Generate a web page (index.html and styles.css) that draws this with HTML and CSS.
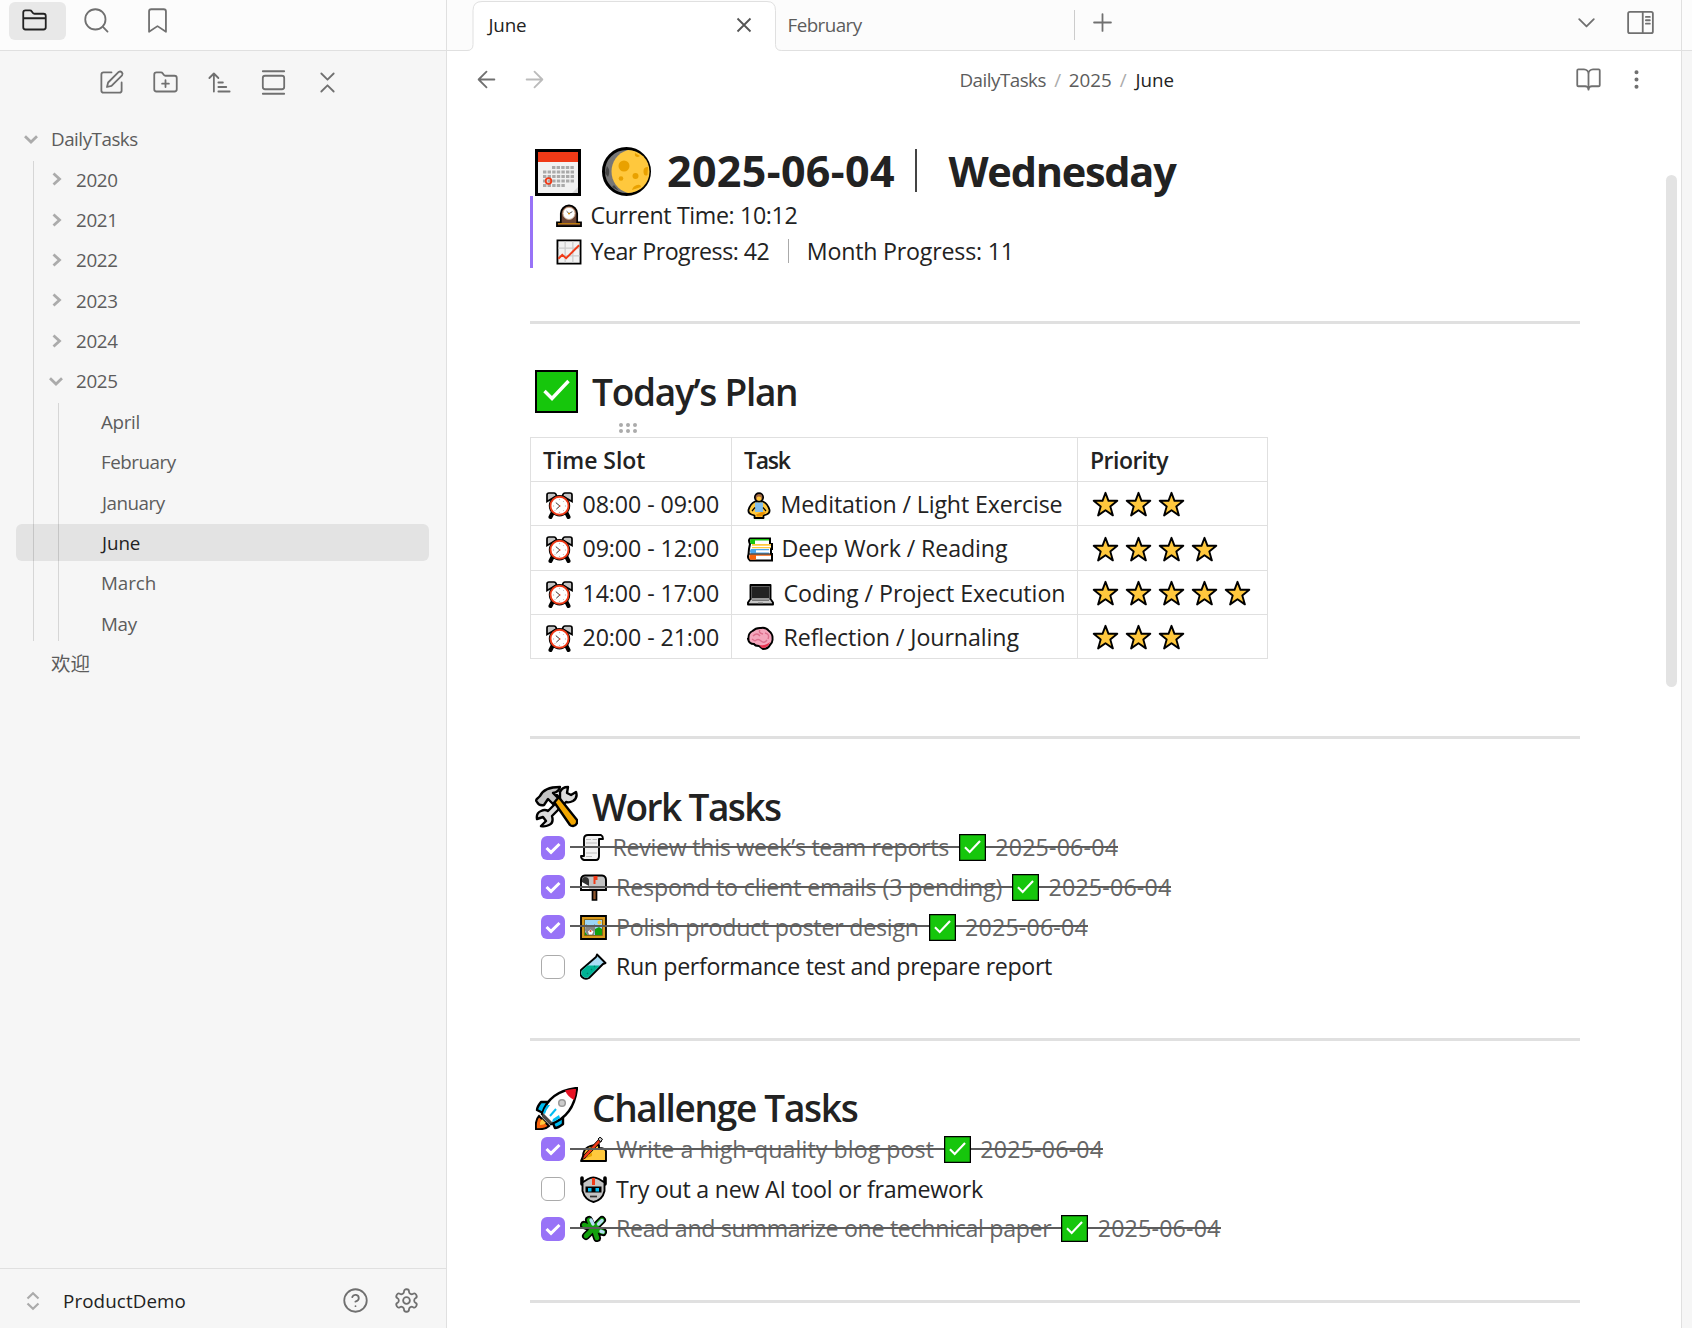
FILE: index.html
```html
<!DOCTYPE html>
<html lang="en">
<head>
<meta charset="utf-8">
<title>June - ProductDemo</title>
<link rel="stylesheet" href="styles.css">
</head>
<body>
<svg class="defs" aria-hidden="true">
  <symbol id="check" viewBox="0 0 43 43"><path fill="#000" d="M0 0h43v43H0z"/><path fill="#16c60c" d="M2 2h39v39H2z"/><path d="M9.500 21l7.500 7.500L33.500 11" fill="none" stroke="#fff" stroke-width="3.400"/></symbol>
  <symbol id="alarm" viewBox="0 0 27 27"><path d="M6.500 21l-2 4M20.500 21l2 4" stroke="#000" stroke-width="4" stroke-linecap="round"/><path d="M1 9.500V3Q1 1 3 1h5q2 0 2.500 3zM26 9.500V3Q26 1 24 1h-5q-2 0-2.500 3z" fill="#c4c4c4" stroke="#000" stroke-width="1.700"/><circle cx="13.500" cy="13.800" r="10.700" fill="#000"/><circle cx="13.500" cy="13.800" r="9" fill="#fff" stroke="#f03a17" stroke-width="1.900"/><g fill="#bbb"><circle cx="13.500" cy="7.500" r=".7"/><circle cx="19.500" cy="14" r=".7"/><circle cx="13.500" cy="20.500" r=".7"/><circle cx="7.500" cy="14" r=".7"/><circle cx="17.500" cy="9.500" r=".6"/><circle cx="17.500" cy="18.500" r=".6"/><circle cx="9" cy="18.500" r=".6"/></g><path d="M9.800 10.600l4 3.400-3.500 3.200" fill="none" stroke="#333" stroke-width="1"/><circle cx="13.800" cy="14" r=".8" fill="#f03a17"/></symbol>
  <symbol id="star" viewBox="0 0 27 27"><path d="M13.500 1.800l3 8h8.800l-7 5.600 2.600 9-7.400-5.200-7.400 5.200 2.600-9-7-5.600h8.800z" fill="#ffc83d" stroke="#000" stroke-width="1.900" stroke-linejoin="round"/></symbol>
  <symbol id="chev-r" viewBox="0 0 14 14"><path d="M4.500 1.500L10.500 7l-6 5.500" fill="none" stroke="#ababab" stroke-width="2.800"/></symbol>
  <symbol id="chev-d" viewBox="0 0 14 14"><path d="M1 4.300l6 5.700 6-5.700" fill="none" stroke="#ababab" stroke-width="2.800"/></symbol>
</svg>

<div class="app">
  <aside class="side">
    <div class="side-tabs">
      <div class="side-tab active"><svg class="icon" viewBox="0 0 24 24"><path d="M20 20a2 2 0 0 0 2-2V8a2 2 0 0 0-2-2h-7.900a2 2 0 0 1-1.690-.9L9.600 3.900A2 2 0 0 0 7.930 3H4a2 2 0 0 0-2 2v13a2 2 0 0 0 2 2ZM2 10h20"/></svg></div>
      <div class="side-tab search"><svg class="icon" viewBox="0 0 24 24"><circle cx="11" cy="11" r="9"/><path d="m21.800 21.800-4.300-4.300"/></svg></div>
      <div class="side-tab"><svg class="icon" viewBox="0 0 24 24"><path d="m19.500 22-7.500-5-7.500 5V4a2 2 0 0 1 2-2h11a2 2 0 0 1 2 2z"/></svg></div>
    </div>
    <div class="side-actions">
      <svg class="icon" viewBox="0 0 24 24"><path d="M12 3H5a2 2 0 0 0-2 2v14a2 2 0 0 0 2 2h14a2 2 0 0 0 2-2v-7M18.400 2.600a2.170 2.170 0 0 1 3 3L12 15l-4 1 1-4Z"/></svg>
      <svg class="icon" viewBox="0 0 24 24"><path d="M12 10v6M9 13h6M20 20a2 2 0 0 0 2-2V8a2 2 0 0 0-2-2h-7.900a2 2 0 0 1-1.690-.9L9.600 3.900A2 2 0 0 0 7.930 3H4a2 2 0 0 0-2 2v13a2 2 0 0 0 2 2Z"/></svg>
      <svg class="icon" viewBox="0 0 24 24"><path d="m3 8 4-4 4 4M7 4v16M11 12h4M11 16h7M11 20h10"/></svg>
      <svg class="icon" viewBox="0 0 24 24"><path d="M2.500 2h19M2.500 22h19"/><rect x="2.500" y="6" width="19" height="12" rx="2"/></svg>
      <svg class="icon" viewBox="0 0 24 24"><path d="m6.500 20 5.500-5.500 5.500 5.500M6.500 4l5.500 5.500L17.500 4"/></svg>
    </div>
    <nav class="tree">
      <div class="row"><svg class="chev"><use href="#chev-d"/></svg><span class="tr-53">DailyTasks</span></div>
      <div class="branch">
        <div class="row"><svg class="chev"><use href="#chev-r"/></svg><span>2020</span></div>
        <div class="row"><svg class="chev"><use href="#chev-r"/></svg><span>2021</span></div>
        <div class="row"><svg class="chev"><use href="#chev-r"/></svg><span>2022</span></div>
        <div class="row"><svg class="chev"><use href="#chev-r"/></svg><span>2023</span></div>
        <div class="row"><svg class="chev"><use href="#chev-r"/></svg><span>2024</span></div>
        <div class="row"><svg class="chev"><use href="#chev-d"/></svg><span>2025</span></div>
        <div class="branch">
          <div class="row"><i class="chev"></i><span>April</span></div>
          <div class="row"><i class="chev"></i><span class="tr-53">February</span></div>
          <div class="row j"><i class="chev"></i><span class="tr-53">January</span></div>
          <div class="row selected j"><i class="chev"></i><span class="tr-10">June</span></div>
          <div class="row"><i class="chev"></i><span class="tr-10">March</span></div>
          <div class="row"><i class="chev"></i><span>May</span></div>
        </div>
      </div>
      <div class="row"><i class="chev"></i><span class="cjk">欢迎</span></div>
    </nav>
    <footer class="vault">
      <svg class="updown" viewBox="0 0 14 20"><path d="M1.500 7.500L7 2.200l5.500 5.300M1.500 12.500L7 17.800l5.500-5.300" fill="none" stroke="#ababab" stroke-width="2.200"/></svg>
      <span class="vault-name">ProductDemo</span>
      <svg class="icon" viewBox="0 0 24 24"><circle cx="12" cy="12" r="10"/><path d="M9.090 9a3 3 0 0 1 5.830 1c0 2-3 3-3 3M12 17h.01"/></svg>
      <svg class="icon" viewBox="0 0 24 24"><path d="M12.220 2h-.44a2 2 0 0 0-2 2v.18a2 2 0 0 1-1 1.730l-.43.25a2 2 0 0 1-2 0l-.15-.08a2 2 0 0 0-2.730.73l-.22.38a2 2 0 0 0 .73 2.730l.15.1a2 2 0 0 1 1 1.720v.51a2 2 0 0 1-1 1.740l-.15.09a2 2 0 0 0-.73 2.730l.22.38a2 2 0 0 0 2.730.73l.15-.08a2 2 0 0 1 2 0l.43.25a2 2 0 0 1 1 1.730V20a2 2 0 0 0 2 2h.44a2 2 0 0 0 2-2v-.18a2 2 0 0 1 1-1.730l.43-.25a2 2 0 0 1 2 0l.15.08a2 2 0 0 0 2.730-.73l.22-.39a2 2 0 0 0-.73-2.730l-.15-.08a2 2 0 0 1-1-1.740v-.5a2 2 0 0 1 1-1.740l.15-.09a2 2 0 0 0 .73-2.730l-.22-.38a2 2 0 0 0-2.730-.73l-.15.08a2 2 0 0 1-2 0l-.43-.25a2 2 0 0 1-1-1.730V4a2 2 0 0 0-2-2z"/><circle cx="12" cy="12" r="3"/></svg>
    </footer>
  </aside>

  <main class="main">
    <div class="tabs">
      <div class="tab open">
        <svg class="tab-shape" viewBox="0 0 320 51"><path d="M0 50.500h2q6 0 6-6V10.500Q8 1.500 17 1.500H302q8.500 0 8.500 9v34q0 6 6 6H320V51H0z" fill="#fff"/><path d="M0 50.500h2q6 0 6-6V10.500Q8 1.500 17 1.500H302q8.500 0 8.500 9v34q0 6 6 6H320" fill="none" stroke="#e0e0e0"/></svg>
        <span class="tab-title">June</span>
        <svg class="close" viewBox="0 0 16 16"><path d="M1.500 1.500l13 13M14.500 1.500l-13 13" stroke="#555" stroke-width="1.800"/></svg>
      </div>
      <div class="tab other"><span>February</span></div>
      <svg class="icon plus" viewBox="0 0 24 24"><path d="M4.500 12h15M12 4.500v15"/></svg>
      <svg class="icon tab-list" viewBox="0 0 24 24"><path d="m5.500 9 6.500 6.500L18.500 9"/></svg>
      <svg class="icon" viewBox="0 0 24 24"><rect x="1" y="2.500" width="22" height="19" rx="1.500"/><path d="M14 2.500v19M16.800 7h3.500M16.800 10h3.500M16.800 13h3.500"/></svg>
    </div>
    <div class="view-head">
      <svg class="icon" viewBox="0 0 24 24"><path d="m12 19-7-7 7-7M19 12H5"/></svg>
      <svg class="icon dim" viewBox="0 0 24 24"><path d="M5 12h14M12 5l7 7-7 7"/></svg>
      <div class="crumbs"><span>DailyTasks</span><i>/</i><span class="year">2025</span><i>/</i><b>June</b></div>
      <svg class="icon book" viewBox="0 0 24 24"><path d="M12 7v14M3 18a1 1 0 0 1-1-1V4a1 1 0 0 1 1-1h5a4 4 0 0 1 4 4 4 4 0 0 1 4-4h5a1 1 0 0 1 1 1v13a1 1 0 0 1-1 1h-6a3 3 0 0 0-3 3 3 3 0 0 0-3-3z"/></svg>
      <svg class="icon dots" viewBox="0 0 24 24"><circle cx="12" cy="12" r="1"/><circle cx="12" cy="5.500" r="1"/><circle cx="12" cy="18.500" r="1"/></svg>
    </div>

    <div class="scroll"></div>
    <article class="note">
      <h1>
        <svg class="cal" viewBox="0 0 46 47"><path fill="#000" d="M0 0h46v47H0z"/><path fill="#f2f2f2" d="M3 3h40v41H3z"/><path fill="#f03a17" d="M3 3h40v10H3z"/><path d="M43 38v6h-6zM3 44h34l6-6v6z" fill="#d8d8d8"/><path d="M17 18.500h22M8 23h31M8 27.500h31M8 32h31M8 36.500h22" stroke="#aaa" stroke-width="3" stroke-dasharray="3.400 1.200"/><circle cx="13.500" cy="32" r="2.800" fill="none" stroke="#f03a17" stroke-width="1.800"/></svg>
        <svg class="moon" viewBox="0 0 49 49"><circle cx="24.500" cy="24.500" r="23" fill="#767676" stroke="#000" stroke-width="3"/><path d="M5 19q4 5 1 11l-3-4zM12 38l5 6-7-4z" fill="#444"/><path d="M26 3a21.500 21.500 0 0 1 0 43C4 40 4 9 26 3z" fill="#ffc83d"/><g fill="#e9a100"><circle cx="22" cy="19" r="5.500"/><circle cx="33.500" cy="29" r="3"/><circle cx="19" cy="31.500" r="2.300"/><path d="M33 6q-1 4 3 4l2-1zM46 20q-5 0-4.500 5t4 3zM30 43q1-4 5-5t4 2z"/></g></svg>
        <span class="date">2025-06-04</span><i class="bar"></i><span class="day">Wednesday</span>
      </h1>
      <blockquote>
        <p>
          <svg class="em" viewBox="0 0 27 27"><path d="M1 24v-4h4V11a8.500 8.500 0 0 1 17 0v9h4v4z" fill="#6d4534" stroke="#000" stroke-width="1.800"/><path d="M2 21.500h23" stroke="#d98e00"/><circle cx="13.500" cy="10.800" r="6.300" fill="#fff" stroke="#c9a789"/><path d="M11 8.500l2.500 2.500 3.500-2" fill="none" stroke="#555"/><circle cx="13.500" cy="11" r="1" fill="#d98e00"/></svg>
          <span class="tr-36">Current Time: 10:12</span>
        </p>
        <p>
          <svg class="em" viewBox="0 0 27 27"><path d="M1.500 1.500h24v24h-24z" fill="#f2f2f2" stroke="#000" stroke-width="1.900"/><path d="M9.500 2.500v22M17.500 2.500v22M2.500 9.500h22M2.500 17.500h22" stroke="#ccc" stroke-width="1.300"/><path d="M2.500 20.500l4-4 4 3.500L24 6.500" fill="none" stroke="#f03a17" stroke-width="2"/></svg>
          <span class="tr-52">Year Progress: 42</span><i class="bar"></i><span class="tr-20">Month Progress: 11</span>
        </p>
      </blockquote>
      <hr class="first">

      <h2><svg class="em"><use href="#check"/></svg><span class="t-plan">Today’s Plan</span></h2>
      <div class="table-wrap">
        <div class="grip"><i></i><i></i><i></i><i></i><i></i><i></i></div>
        <table>
          <tr><th><span>Time Slot</span></th><th><span class="t-task">Task</span></th><th><span class="tr-52">Priority</span></th></tr>
          <tr>
            <td><div class="cell"><svg class="em"><use href="#alarm"/></svg><span>08:00 - 09:00</span></div></td>
            <td><div class="cell"><svg class="em slim" viewBox="0 0 24 27"><path d="M8 9.500Q3 12 1.500 18q-.5 3 3 4.500l3 1v2.500h9v-2.500l3-1q3.500-1.500 3-4.500-1.500-6-6.500-8.500z" fill="#ffc83d" stroke="#000" stroke-width="1.800" stroke-linejoin="round"/><path d="M8 10.500h8V20H8z" fill="#83beec"/><path d="M5 19l3-3.500M19 19l-3-3.500" stroke="#000" stroke-width="1.200"/><path d="M9 22.500l6-2.500 4 .5-5 4h-4z" fill="#e98f00"/><circle cx="12" cy="5.300" r="4.200" fill="#a56a43" stroke="#000" stroke-width="1.700"/><path d="M9.800 5.500q2-1.800 4.400 0v2.300q-2 2-4.400 0z" fill="#ffc83d"/></svg><span class="tr-13">Meditation / Light Exercise</span></div></td>
            <td><div class="stars"><svg><use href="#star"/></svg><svg><use href="#star"/></svg><svg><use href="#star"/></svg></div></td>
          </tr>
          <tr class="tall">
            <td><div class="cell"><svg class="em"><use href="#alarm"/></svg><span>09:00 - 12:00</span></div></td>
            <td><div class="cell"><svg class="em books" viewBox="0 0 26 27"><path d="M3 2.500h20V8h2v5h-1v5h1v6.500H3Q0 22 1.500 18.500L2 13 3 8Q1 4 3 2.500z" fill="#fff" stroke="#000" stroke-width="2"/><path d="M22 3H4Q2 5 4 8h4V4.500h14z" fill="#16c60c"/><path d="M24 8H5v1.800h19zM5 11h19v1.200H5z" fill="#ffc83d"/><path d="M22 13H4q-2 2 0 4.500h18V16.500H9v-2.300h13z" fill="#4aa5ec"/><path d="M24 18.500H3q-1.500 3 0 5.200h6v-4h15z" fill="#f7630c"/><path d="M2 18h22" stroke="#000"/></svg><span class="tr-10">Deep Work / Reading</span></div></td>
            <td><div class="stars"><svg><use href="#star"/></svg><svg><use href="#star"/></svg><svg><use href="#star"/></svg><svg><use href="#star"/></svg></div></td>
          </tr>
          <tr>
            <td><div class="cell"><svg class="em"><use href="#alarm"/></svg><span>14:00 - 17:00</span></div></td>
            <td><div class="cell"><svg class="em" viewBox="0 0 27 27"><path d="M3.500 4h20v14l2.500 3.500v2H1v-2L3.500 18z" fill="#999" stroke="#000" stroke-width="1.900" stroke-linejoin="round"/><path d="M5 5.500h17v11.500H5z" fill="#222"/><path d="M4 19h19l2 3H2z" fill="#c8c8c8"/><path d="M5 19.500h17M11 22h5" stroke="#777"/></svg><span class="tr-05">Coding / Project Execution</span></div></td>
            <td><div class="stars"><svg><use href="#star"/></svg><svg><use href="#star"/></svg><svg><use href="#star"/></svg><svg><use href="#star"/></svg><svg><use href="#star"/></svg></div></td>
          </tr>
          <tr>
            <td><div class="cell"><svg class="em"><use href="#alarm"/></svg><span>20:00 - 21:00</span></div></td>
            <td><div class="cell"><svg class="em" viewBox="0 0 27 27"><path d="M1.500 14Q1 8 5.500 6 9 2.500 14 3q5-1 8 3 4 3 3.500 8 .5 3-2.500 6-2 4-7 4l-4-3q-4 0-5-2-5 0-6-5z" fill="#f4a6bc" stroke="#000" stroke-width="1.900"/><path d="M12 20q7 1 11-3-2 6-8 6z" fill="#e8334f"/><path d="M6 11q4-4 7 0M13 5q-2 3 3 4M18 8q5 1 3 6M8 16q3-3 6 0t6-1M5 14l3 2" fill="none" stroke="#dd6f8d" stroke-width="1.400"/></svg><span class="tr-10">Reflection / Journaling</span></div></td>
            <td><div class="stars"><svg><use href="#star"/></svg><svg><use href="#star"/></svg><svg><use href="#star"/></svg></div></td>
          </tr>
        </table>
      </div>
      <hr class="after-table">

      <h2><svg class="em" viewBox="0 0 43 43"><g stroke="#000" stroke-linejoin="round" stroke-width="2.400"><path d="M25 14V7q2-5 8-5l-1 6 4 2 5-3q2 6-3 9-4 2-7 1L17 31q2 7-3 9-4 2-8 1l5-5-3-4-6 2q-1-6 4-8 4-2 7 0z" fill="#dcdcdc"/><path d="M17 14l5-4 20 25q1 5-4 6-2 0-3-1z" fill="#f2a600"/><path d="M2 17q-2-2 1-4l2-2q4-9 20-9-1 5-7 6l5 5-5 6-5-5-4 6q-5 1-7-3z" fill="#c4c4c4"/></g></svg><span class="t-work">Work Tasks</span></h2>
      <ul>
        <li class="done"><i class="box"><svg viewBox="0 0 24 24"><path d="M5.500 12l4.500 4.300L18.500 8"/></svg></i><div class="body">
          <svg class="em scroll-ic" viewBox="0 0 24 27"><path d="M4 5Q4 1 8 1h13q2 1 2 4h-4v17q0 4-3 4H4q-3-1-3-4h3z" fill="#f2f2f2" stroke="#000" stroke-width="1.900" stroke-linejoin="round"/><path d="M6 5.500h5M12.500 5.500H17M6 9h11M6 12.500h11M6 19h11M6 22.500h6" stroke="#bbb" stroke-width="1.200"/></svg><span class="tr-30">Review this week’s team reports</span><svg class="em ok"><use href="#check"/></svg><span class="due">2025-06-04</span></div></li>
        <li class="done"><i class="box"><svg viewBox="0 0 24 24"><path d="M5.500 12l4.500 4.300L18.500 8"/></svg></i><div class="body">
          <svg class="em" viewBox="0 0 27 27"><path d="M12.500 16h4v10h-4z" fill="#8e562e" stroke="#000" stroke-width="1.700"/><path d="M1 16V6q0-4 4-4.500h17q4 .5 4 4.500v10z" fill="#c4c4c4" stroke="#000" stroke-width="1.900"/><path d="M2 15V7q0-4 3-4 4 0 4 4v8z" fill="#333"/><path d="M2 8l7 4v3H2z" fill="#fff"/><path d="M13.500 2h4v4h-2v4h-2z" fill="#f03a17"/></svg><span class="tr-13">Respond to client emails (3 pending)</span><svg class="em ok"><use href="#check"/></svg><span class="due">2025-06-04</span></div></li>
        <li class="done"><i class="box"><svg viewBox="0 0 24 24"><path d="M5.500 12l4.500 4.300L18.500 8"/></svg></i><div class="body">
          <svg class="em" viewBox="0 0 27 27"><path d="M1 2h25v23H1z" fill="#d99a1c" stroke="#000" stroke-width="1.800"/><path d="M4.500 5.500h18v16h-18z" fill="#9bd6f8" stroke="#7a5300" stroke-width=".8"/><circle cx="19.500" cy="8.500" r="2" fill="#ffc83d"/><path d="M15 21v-6l4-2 3 2v6zM5 18l3 3H5z" fill="#13a10e"/><path d="M6 10l3 2.500h3l3-2.500v6l-1 5H7l-2-5z" fill="#868686"/><path d="M8 17.500l2.500-2 3 2-1.500 3H9z" fill="#fff"/><circle cx="10.500" cy="17" r="1" fill="#f03a17"/></svg><span class="tr-23">Polish product poster design</span><svg class="em ok"><use href="#check"/></svg><span class="due">2025-06-04</span></div></li>
        <li><i class="box"></i><div class="body">
          <svg class="em" viewBox="0 0 27 27"><path d="M17 1.500L25.500 10 23 11 9 25q-4 2-7-1t-1-7L16 4z" fill="#a9dcf5" stroke="#000" stroke-width="1.900" stroke-linejoin="round"/><path d="M7.500 12.500H20L8.500 24q-3 1.500-5.500-.5t-1-6z" fill="#00b294"/><path d="M14 13l1 1M7 20l1 1M11 16l1 1" stroke="#008272" stroke-width="1.500"/></svg><span class="tr-36">Run performance test and prepare report</span></div></li>
      </ul>
      <hr>

      <h2><svg class="em" viewBox="0 0 43 43"><path d="M1 42q-1-9 3-13l10 10q-4 4-13 3z" fill="#f7630c" stroke="#000" stroke-width="2"/><path d="M5 38q0-4 2-6l4 4q-2 2-6 2z" fill="#ffc83d"/><path d="M15 15H6q-4 5-4 8l6 3zM28 28v9q-5 4-8 4l-3-7z" fill="#00bcf2" stroke="#000" stroke-width="2.400" stroke-linejoin="round"/><path d="M7 27Q14 4 42 1q-3 28-26 36z" fill="#fff" stroke="#000" stroke-width="2.400"/><path d="M30 3.500q6-2 11-1.500 0 6-2 11-6-3-9-9.500z" fill="#e81224"/><path d="M8 26l10 10-4 1-7-7z" fill="#4a4a4a"/><path d="M12 18q-3 4-4 8l2 1q1-4 5-9zM25 31q-4 3-8 4l1-3 6-4z" fill="#00bcf2"/><path d="M21 22l-6 7" stroke="#00bcf2" stroke-width="2"/><circle cx="27" cy="16" r="3.300" fill="#ccc" stroke="#999" stroke-width="1.500"/></svg><span class="t-challenge">Challenge Tasks</span></h2>
      <ul>
        <li class="done"><i class="box"><svg viewBox="0 0 24 24"><path d="M5.500 12l4.500 4.300L18.500 8"/></svg></i><div class="body">
          <svg class="em" viewBox="0 0 27 27"><path d="M1 25l2-5q0-6 5-9 4-2 11-2v3q6 0 7 3v10z" fill="#ffc83d" stroke="#000" stroke-width="1.900" stroke-linejoin="round"/><path d="M19 3l2.500 2L6 21.500l-4 2.500 2-5z" fill="#f03a17" stroke="#000" stroke-width=".9"/><path d="M18 3l2-1.800 2.500 2L20.500 6z" fill="#ccc" stroke="#000"/><path d="M8 19l4-2v3l-5 2z" fill="#e9a100"/></svg><span class="tr-plus">Write a high-quality blog post</span><svg class="em ok"><use href="#check"/></svg><span class="due">2025-06-04</span></div></li>
        <li><i class="box"></i><div class="body">
          <svg class="em" viewBox="0 0 27 27"><path d="M2 2v6M25 2v6" stroke="#000" stroke-width="3.600" stroke-linecap="round"/><path d="M2.500 6.500L8 3q5-3 11 0l5.500 3.500V15q-2 9-11 11Q5 24 2.500 15z" fill="#c4c4c4" stroke="#000" stroke-width="1.900"/><path d="M12 2h3v7h-3z" fill="#f03a17"/><path d="M5.500 10.500h16v6h-16z" fill="#000"/><path d="M8 12h3.500v3.500H8zM15.500 12H19v3.500h-3.500z" fill="#00bcf2"/><path d="M10 20.500h7" stroke="#333" stroke-width="1.700"/></svg><span class="tr-26">Try out a new AI tool or framework</span></div></li>
        <li class="done"><i class="box"><svg viewBox="0 0 24 24"><path d="M5.500 12l4.500 4.300L18.500 8"/></svg></i><div class="body">
          <svg class="em" viewBox="0 0 27 27"><path d="M9 5l3 7M22 5l-8 8M4 10l8 3M6 21l7-7M23 17l-8-3M17 23l-3-9" stroke="#000" stroke-width="8" stroke-linecap="round"/><path d="M9 5l3 7M22 5l-8 8M4 10l8 3M6 21l7-7M23 17l-8-3M17 23l-3-9" stroke="#13a10e" stroke-width="4.600" stroke-linecap="round"/><path d="M11 5l2 4M22 5.500l-3.500 3.500M23 17l-2-.7" stroke="#b9e0f7" stroke-width="3.400" stroke-linecap="round"/></svg><span class="tr-33">Read and summarize one technical paper</span><svg class="em ok"><use href="#check"/></svg><span class="due">2025-06-04</span></div></li>
      </ul>
      <hr>
    </article>
  </main>
  <div class="right-side"><div class="right-head"></div></div>
</div>
</body>
</html>
```
FILE: styles.css
```css
* { box-sizing: border-box; }
html, body { margin: 0; height: 100%; overflow: hidden; }
body {
  font-family: "Open Sans", "Noto Sans", "Noto Sans CJK SC", sans-serif;
  font-size: 18.8px;
  color: #222;
  background: #fff;
}
i { font-style: normal; }
svg { display: block; flex: none; }
.defs { position: absolute; width: 0; height: 0; }
.app { display: flex; height: 1328px; }
.icon {
  width: 27px; height: 27px;
  fill: none; stroke: #707070; stroke-width: 1.6;
  stroke-linecap: round; stroke-linejoin: round;
}

/* sidebar */
.side {
  width: 447px; flex: none;
  display: flex; flex-direction: column;
  background: #f6f6f6;
  border-right: 1px solid #e0e0e0;
}
.side-tabs {
  height: 51px; flex: none; display: flex; gap: 4px;
  padding: 2px 9px 0;
  background: #fcfcfc;
  border-bottom: 1px solid #e0e0e0;
}
.side-tab {
  width: 57px; height: 38px; border-radius: 6px;
  display: flex; align-items: center; justify-content: center;
}
.side-tab .icon { margin-top: -1px; }
.side-tab.active { background: #e8e8e8; padding-right: 6px; }
.side-tab.active .icon { stroke: #222; }
.side-tab.search { margin-left: -2px; }
.side-actions { display: flex; gap: 27px; padding: 18px 0 0 97.500px; }
.tree { padding: 24.500px 17px 0 16px; flex: 1; }
.row {
  display: flex; align-items: center;
  height: 36.850px; margin-bottom: 3.500px;
  padding-left: 7.500px; border-radius: 6px;
  color: #5c5c5c;
  letter-spacing: -.35px;
}
.row span { position: relative; top: .5px; }
.row.j span { margin-left: 1px; }
.chev { width: 14px; height: 14px; margin-right: 13.500px; flex: none; display: block; }
.branch { position: relative; padding-left: 25px; }
.branch::before {
  content: ""; position: absolute; z-index: 1;
  left: 17px; top: 0; bottom: 0; width: 1px;
  background: rgba(0, 0, 0, .13);
}
.branch .branch { padding-left: 0; }
.branch .branch .row { padding-left: 32.500px; }
.row.selected { margin-left: -25px; background: #e3e3e3; color: #222; }
.branch .branch .row.selected { padding-left: 57.500px; }
.cjk { font-family: "Noto Sans CJK SC", sans-serif; font-size: 19.500px; letter-spacing: 0; margin-top: -3px; }
.vault {
  height: 60px; flex: none; display: flex; align-items: center;
  border-top: 1px solid #e0e0e0;
  padding: 4px 26px 0 26px;
}
.updown { width: 14px; height: 20px; }
.vault-name { margin-left: 23px; flex: 1; font-weight: 500; letter-spacing: .1px; }
.vault .icon { margin-left: 24px; }

/* tab strip */
.main { width: 1234px; flex: none; position: relative; }
.tabs {
  height: 51px; display: flex; align-items: center;
  background: #fcfcfc; border-bottom: 1px solid #e0e0e0;
  padding: 0 27px 6px 26px;
}
.tab { position: relative; display: flex; align-items: center; height: 30px; letter-spacing: -.55px; padding-top: 5px; }
.tab.open { width: 302px; padding-left: 15.500px; padding-right: 23px; justify-content: space-between; }
.tab.open span, .close { position: relative; }
.tab .tab-title { color: #222; letter-spacing: -.2px; }
.close { width: 16px; height: 16px; }
.tab-shape { position: absolute; left: -8.500px; top: -7px; width: 320px; height: 51px; }
.tab.other { width: 299.500px; padding-left: 12.500px; color: #5c5c5c; }
.tab.other::after {
  content: ""; position: absolute; right: 0; top: 3px;
  width: 1px; height: 30px; background: #ccc;
}
.plus { margin-left: 14.500px; }
.tab-list { margin-left: auto; margin-right: 27.500px; }
.view-head { display: flex; align-items: center; height: 57px; padding: 0 31.500px 0 25.500px; }
.view-head .dim { margin-left: 21px; stroke: #bbb; }
.crumbs {
  flex: 1; display: flex; justify-content: center;
  padding-left: 11.500px; padding-top: 1px;
  color: #5c5c5c; letter-spacing: -.5px;
}
.crumbs i { color: #ababab; margin: 0 8.200px; }
.crumbs .year { letter-spacing: 0; }
.crumbs b { font-weight: 400; color: #222; letter-spacing: 0; margin-left: 1px; }
.book { margin-right: 21px; }
.dots { fill: #707070; }
.scroll {
  position: absolute; right: 4px; top: 175px;
  width: 11px; height: 512px; border-radius: 6px;
  background: #e3e3e3;
}

/* note */
.note { width: 1050px; margin-left: 83px; padding-top: 38px; font-size: 23.200px; }
h1, h2, p, ul, blockquote { margin: 0; padding: 0; }
h1 {
  display: flex; align-items: center;
  height: 50px; line-height: 50px;
  padding-left: 5px; font-size: 43px; font-weight: 700;
}
.cal { width: 46px; height: 47px; margin-top: 3px; }
.moon { width: 49px; height: 49px; margin-left: 21px; }
.date { margin-left: 16px; width: 248px; letter-spacing: .35px; }
.bar { width: 2px; height: 43px; background: #444; }
h1 .bar { margin-top: -1px; }
h1 .day { font-size: 41.500px; letter-spacing: -1.250px; margin-left: 31.500px; }
blockquote { border-left: 3px solid #9873f7; padding-left: 23px; }
blockquote p { display: flex; align-items: center; height: 36px; line-height: 36px; }
blockquote p span { margin-top: 2px; }
blockquote .em { width: 26px; height: 26px; margin: 3px 9px 0 -.5px; }
blockquote .bar { width: 1px; height: 24px; margin: 2px 18px 0 18.500px; background: #aaa; }
hr { border: 0; height: 3px; margin: 51px 0 46px; background: #e0e0e0; }
hr.first { margin-top: 53px; }
hr.after-table { margin-top: 77px; }
h2 {
  display: flex; align-items: center; height: 43px; line-height: 43px;
  padding-left: 5px; font-size: 37px; font-weight: 600;
}
h2 .em { width: 43px; height: 43px; margin-right: 14px; }
h2 span { margin-top: -1px; }
.t-plan { letter-spacing: -1.270px; }
.t-work { letter-spacing: -1.550px; }
.t-challenge { letter-spacing: -1.300px; }

.table-wrap { position: relative; margin-top: 24px; }
.grip {
  position: absolute; left: 89px; top: -14px;
  display: grid; grid-template-columns: repeat(3, 4px); gap: 2px 3px;
}
.grip i { width: 4px; height: 4px; border-radius: 50%; background: #ababab; }
table { border-collapse: collapse; width: 738px; height: 222px; table-layout: fixed; }
th:nth-child(1) { width: 201px; }
th:nth-child(2) { width: 346px; }
th, td { border: 1px solid #e0e0e0; padding: 0 0 0 13px; height: 44px; text-align: left; line-height: 34px; }
tr.tall td { height: 45px; }
th { font-size: 23px; font-weight: 600; letter-spacing: -.05px; padding-left: 12px; }
.t-task { letter-spacing: -1.300px; }
.cell, .stars { display: flex; align-items: center; }
.cell .em { width: 27px; height: 27px; margin: 3px 9.500px 0 2px; }
.cell span { letter-spacing: -.08px; }
.cell .em.slim { width: 24px; }
.cell .em.books { width: 26px; margin-right: 8.500px; }
.stars { gap: 6px; padding-left: 1px; }
.stars svg { width: 27px; height: 27px; margin-top: 2px; }

ul { list-style: none; }
li { display: flex; align-items: center; height: 39.670px; padding-left: 11px; }
.box { width: 24px; height: 24px; border: 1px solid #ababab; border-radius: 6px; margin-right: 5px; flex: none; }
.done .box { border: 0; background: #9873f7; }
.box svg { width: 24px; height: 24px; fill: none; stroke: #fff; stroke-width: 3; }
.body { position: relative; display: flex; align-items: center; height: 39.670px; line-height: 38px; padding-left: 9.500px; }
.body span { margin-top: -1px; }
.body .em { width: 27px; height: 27px; margin-right: 9.500px; }
.body .em.scroll-ic { width: 24px; margin-right: 9px; }
.done .body { color: #666; }
.done .body::after {
  content: ""; position: absolute; left: 0; right: 0; top: 18px;
  height: 2px; background: #5c5c5c;
}
.body .em.ok { margin: 0 9.500px 0 9.800px; z-index: 1; }
.due { letter-spacing: .18px; }

/* tracking steps */
span.tr-plus { letter-spacing: .06px; }
span.tr-05 { letter-spacing: -.05px; }
span.tr-10 { letter-spacing: -.09px; }
span.tr-13 { letter-spacing: -.13px; }
span.tr-20 { letter-spacing: -.2px; }
span.tr-23 { letter-spacing: -.23px; }
span.tr-26 { letter-spacing: -.25px; }
span.tr-30 { letter-spacing: -.29px; }
span.tr-33 { letter-spacing: -.32px; }
span.tr-36 { letter-spacing: -.36px; }
span.tr-52 { letter-spacing: -.52px; }
span.tr-53 { letter-spacing: -.48px; }

.right-side { flex: 1; background: #f6f6f6; border-left: 1px solid #e0e0e0; }
.right-head { height: 51px; background: #fcfcfc; border-bottom: 1px solid #e0e0e0; }
```
